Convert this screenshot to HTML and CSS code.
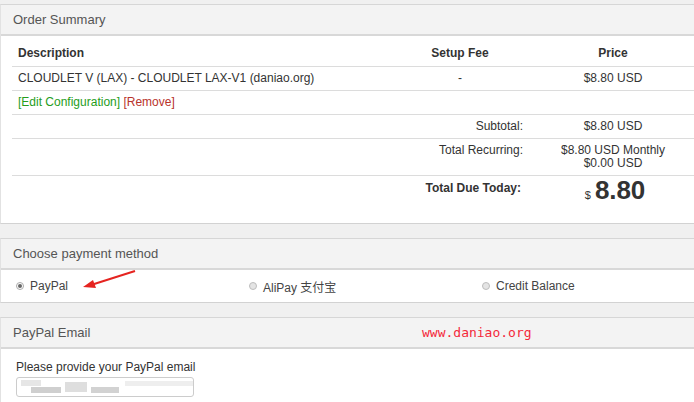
FILE: index.html
```html
<!DOCTYPE html>
<html>
<head>
<meta charset="utf-8">
<link rel="stylesheet" href="styles.css">
</head>
<body>
<div class="page">
  <section class="panel summary">
    <div class="panel-head">Order Summary</div>
    <div class="panel-body">
      <div class="tbl">
        <div class="row head">
          <div class="c desc">Description</div>
          <div class="c mid">Setup Fee</div>
          <div class="c mid">Price</div>
        </div>
        <div class="row">
          <div class="c desc">CLOUDLET V (LAX) - CLOUDLET LAX-V1 (daniao.org)</div>
          <div class="c mid">-</div>
          <div class="c mid">$8.80 USD</div>
        </div>
        <div class="row">
          <div class="c desc"><span class="edit">[Edit Configuration]</span> <span class="remove">[Remove]</span></div>
          <div class="c"></div>
          <div class="c"></div>
        </div>
        <div class="row">
          <div class="c label">Subtotal:</div>
          <div class="c mid">$8.80 USD</div>
        </div>
        <div class="row recurring">
          <div class="c label">Total Recurring:</div>
          <div class="c mid stack">$8.80 USD Monthly<br>$0.00 USD</div>
        </div>
        <div class="row due">
          <div class="c label bold">Total Due Today:</div>
          <div class="c mid amount"><span class="cur">$</span><span class="big">8.80</span></div>
        </div>
      </div>
    </div>
  </section>

  <section class="panel payment">
    <div class="panel-head">Choose payment method</div>
    <div class="panel-body methods">
      <label class="method"><span class="radio checked"></span>PayPal</label>
      <label class="method"><span class="radio"></span>AliPay 支付宝</label>
      <label class="method"><span class="radio"></span>Credit Balance</label>
    </div>
    <svg class="arrow" width="60" height="24" viewBox="0 0 60 24">
      <line x1="54" y1="1" x2="10" y2="15" stroke="#e52420" stroke-width="2"/>
      <polygon points="2,17 12,10 15,18" fill="#e52420"/>
    </svg>
  </section>

  <section class="panel email">
    <div class="panel-head">PayPal Email<span class="watermark">www.daniao.org</span></div>
    <div class="panel-body emailbody">
      <div class="prompt">Please provide your PayPal email</div>
      <div class="input">
        <span class="blur b1"></span><span class="blur b2"></span><span class="blur b3"></span><span class="blur b4"></span><span class="blur b5"></span>
      </div>
    </div>
  </section>
</div>
</body>
</html>
```

FILE: styles.css
```css
* { box-sizing: border-box; }
html, body { margin: 0; padding: 0; }
body {
  background: #f0f0f0;
  font-family: "Liberation Sans", Arial, "Noto Sans CJK SC", sans-serif;
  font-size: 12px;
  color: #333;
  width: 694px;
  height: 402px;
  overflow: hidden;
}
.page {
  display: flex;
  flex-direction: column;
  gap: 14px;
  padding-top: 4px;
}
.panel {
  position: relative;
  background: #fff;
  border-top: 1px solid #d6d6d6;
  border-bottom: 1px solid #d2d2d2;
  border-left: 1px solid #e2e2e2;
}
.panel-head {
  position: relative;
  background: #f3f3f3;
  color: #555;
  font-size: 13px;
  height: 31px;
  line-height: 30px;
  padding-left: 12px;
  border-bottom: 2px solid #d8d8d8;
}
.summary .panel-body {
  height: 187px;
  padding: 4px 0 0 11px;
}
.tbl { width: 682px; }
.row {
  display: grid;
  grid-template-columns: 376px 144px 162px;
  border-top: 1px solid #dcdcdc;
  line-height: 17px;
}
.row.head { border-top: none; font-weight: bold; color: #333; }
.row.head .c { padding: 4px 6px; line-height: 18px; }
.c { padding: 3px 6px; min-height: 23px; }
.desc { text-align: left; }
.mid { text-align: center; }
.label { grid-column: 1 / span 2; text-align: right; padding-right: 9px; }
.bold { font-weight: bold; }
.recurring .c { line-height: 13px; padding-top: 5px; padding-bottom: 5px; }
.due .c { padding-top: 4px; }
.due .label { padding-top: 5px; line-height: 14px; padding-right: 11px; }
.amount { line-height: 20px; padding-left: 10px; }
.cur { font-size: 11px; margin-right: 4px; }
.big { font-size: 26px; font-weight: bold; letter-spacing: -0.1px; }
.edit { color: #259d1c; }
.remove { color: #b9332c; }

.methods {
  display: flex;
  height: 32px;
  align-items: center;
  padding-left: 15px;
}
.method {
  flex: 0 0 233px;
  display: flex;
  align-items: center;
  color: #444;
  font-size: 12px;
}
.radio {
  display: inline-block;
  width: 8px;
  height: 8px;
  border-radius: 50%;
  border: 1px solid #bdbdbd;
  background: #e4e4e4;
  margin-right: 6px;
  position: relative;
}
.radio.checked { background: #fff; border-color: #aaa; }
.radio.checked::after {
  content: "";
  position: absolute;
  left: 1px; top: 1px;
  width: 4px; height: 4px;
  border-radius: 50%;
  background: #666;
}
.arrow {
  position: absolute;
  left: 80px;
  top: 31px;
}
.watermark {
  position: absolute;
  left: 421px;
  top: 0;
  font-family: "DejaVu Sans Mono", "Liberation Mono", monospace;
  font-size: 13px;
  color: #f4283a;
}
.emailbody {
  height: 60px;
  padding: 10px 0 0 15px;
}
.prompt { color: #333; line-height: 16px; font-size: 12px; }
.input {
  margin-top: 2px;
  width: 178px;
  height: 20px;
  border: 1px solid #ccc;
  border-radius: 3px;
  position: relative;
  background: #fff;
  overflow: hidden;
}
.blur { position: absolute; background: #d8d8d8; }
.b1 { left: 4px; top: 2px; width: 20px; height: 6px; background: #e6e6e6; }
.b2 { left: 14px; top: 9px; width: 30px; height: 6px; background: #cfcfcf; }
.b3 { left: 48px; top: 4px; width: 22px; height: 10px; background: #dedede; }
.b4 { left: 74px; top: 9px; width: 28px; height: 6px; background: #d2d2d2; }
.b5 { left: 108px; top: 3px; width: 70px; height: 5px; background: #eeeeee; }
```
